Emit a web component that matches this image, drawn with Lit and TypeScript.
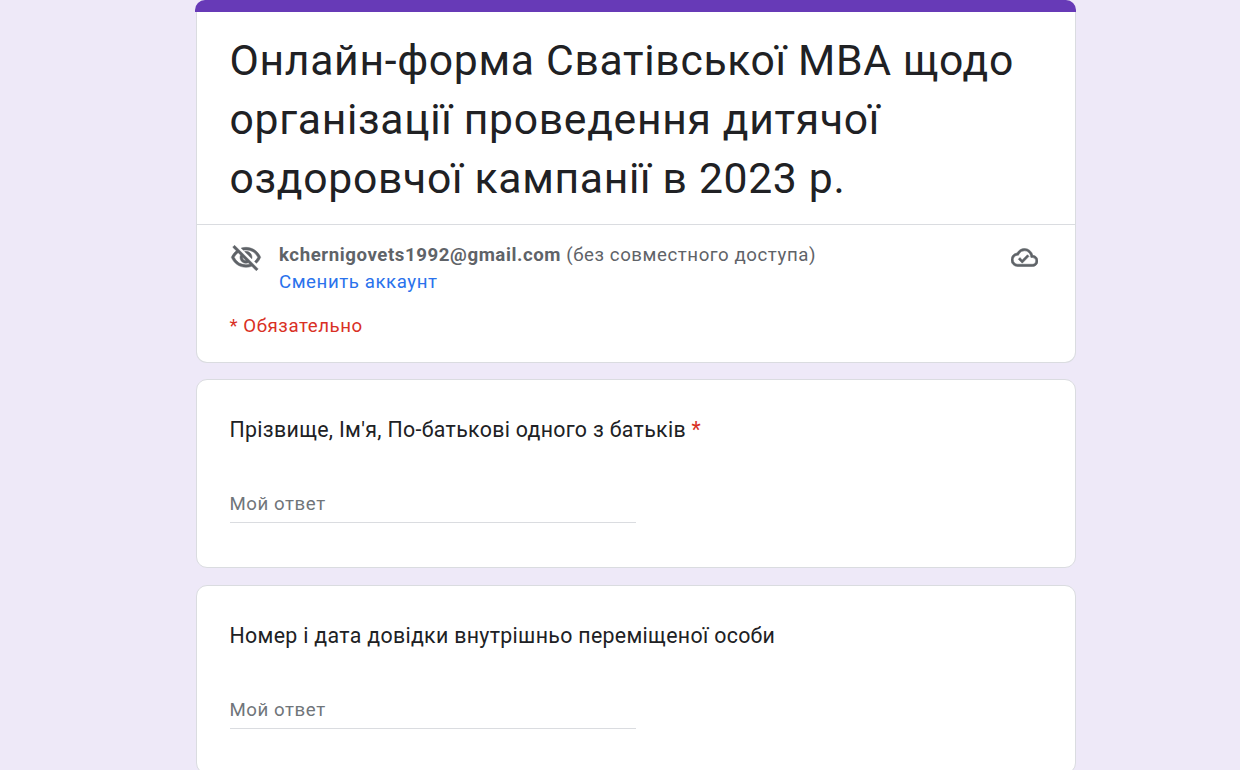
import { LitElement, html, css } from "lit";
import { customElement } from "lit/decorators.js";

@customElement("app-root")
export class AppRoot extends LitElement {
  static styles = css`
    :host { display: block; height: 770px; overflow: hidden; background: #eee9f8; font-family: Roboto, "Liberation Sans", sans-serif; color: #202124; }
    .page { width: 880px; margin-left: 196px; display: flex; flex-direction: column; gap: 16px; }
    .card { background: #fff; border: 1px solid #dadce0; border-radius: 11px; box-sizing: border-box; }
    .head { position: relative; border-top: none; height: 363px; }
    .bar { height: 12px; background: #673ab7; margin: 0 -1px 0 -2px; border-radius: 10px 10px 0 0; }
    h1 { margin: 0; padding: 19px 32px 16px 32.5px; font-weight: 400; font-size: 42.67px; line-height: 59px; letter-spacing: .69px; height: 177px; border-bottom: 1px solid #dadce0; color: #202124; }
    .acct { display: flex; padding: 17px 32px 0 33px; align-items: flex-start; }
    .eye { width: 32px; height: 32px; margin-right: 17px; flex: none; fill: #5f6368; stroke: #5f6368; stroke-width: .35; }
    .info { flex: 1; font-size: 18.67px; line-height: 27px; letter-spacing: .57px; color: #5f6368; }
    .info b { font-weight: 700; }
    .link { color: #2a72ec; display: block; }
    .cloud { width: 27px; height: 27px; flex: none; fill: #5f6368; stroke: #5f6368; stroke-width: .5; margin: 2px 5px 0 0; }
    .req { padding: 17px 32.5px 0; font-size: 18.67px; line-height: 27px; letter-spacing: .56px; color: #d93025; }
    .q { height: 189px; padding: 35px 32px 0 32.5px; }
    .q + .q { margin-top: 1px; }
    .qt { font-size: 21.33px; line-height: 30px; letter-spacing: .32px; color: #202124; }
    .qt span { color: #d93025; }
    .ans { width: 406px; margin-top: 45px; height: 33px; border-bottom: 1px solid #dadce0; font-size: 18.67px; line-height: 28px; letter-spacing: .56px; color: #70757a; box-sizing: border-box; }
  `;

  render() {
    return html`<div class="page">
      <section class="card head">
        <div class="bar"></div>
        <h1>Онлайн-форма Сватівської МВА щодо організації проведення дитячої оздоровчої кампанії в 2023 р.</h1>
        <div class="acct">
          <svg class="eye" viewBox="0 0 24 24"><path d="M12 6a9.77 9.77 0 0 1 8.82 5.5 9.76 9.76 0 0 1-2.41 3.12l1.41 1.41c1.39-1.23 2.49-2.77 3.18-4.53C21.27 7.11 17 4 12 4c-1.27 0-2.49.2-3.64.57l1.65 1.65C10.66 6.09 11.32 6 12 6zm-1.07 1.14L13 9.21c.57.25 1.03.71 1.28 1.28l2.07 2.07c.08-.34.14-.7.14-1.07C16.5 9.01 14.48 7 12 7c-.37 0-.72.05-1.07.14zM2.01 3.87l2.68 2.68A11.74 11.74 0 0 0 1 11.5C2.73 15.89 7 19 12 19c1.52 0 2.98-.29 4.32-.82l3.42 3.42 1.41-1.41L3.42 2.45 2.01 3.87zm7.5 7.5 2.61 2.61c-.04.01-.08.02-.12.02a2.5 2.5 0 0 1-2.5-2.5c0-.05.01-.08.01-.13zm-3.4-3.4 1.75 1.75a4.6 4.6 0 0 0-.36 1.78 4.507 4.507 0 0 0 6.27 4.14l.98.98c-.88.24-1.8.38-2.75.38a9.77 9.77 0 0 1-8.82-5.5c.7-1.43 1.72-2.61 2.93-3.53z"/></svg>
          <div class="info">
            <div><b>kchernigovets1992@gmail.com</b> (без совместного доступа)</div>
            <span class="link">Сменить аккаунт</span>
          </div>
          <svg class="cloud" viewBox="0 0 24 24"><path d="M19.35 10.04A7.49 7.49 0 0 0 12 4C9.11 4 6.6 5.64 5.35 8.04A5.994 5.994 0 0 0 0 14c0 3.31 2.69 6 6 6h13c2.76 0 5-2.24 5-5 0-2.64-2.05-4.78-4.65-4.96zM19 18H6c-2.21 0-4-1.79-4-4 0-2.05 1.53-3.76 3.56-3.97l1.07-.11.5-.95A5.469 5.469 0 0 1 12 6c2.62 0 4.88 1.86 5.39 4.43l.3 1.5 1.53.11A2.98 2.98 0 0 1 22 15c0 1.65-1.35 3-3 3zm-9-3.82-2.09-2.09L6.5 13.5 10 17l6.01-6.01-1.41-1.41z"/></svg>
        </div>
        <div class="req">* Обязательно</div>
      </section>
      <section class="card q">
        <div class="qt">Прізвище, Ім'я, По-батькові одного з батьків <span>*</span></div>
        <div class="ans">Мой ответ</div>
      </section>
      <section class="card q">
        <div class="qt">Номер і дата довідки внутрішньо переміщеної особи</div>
        <div class="ans">Мой ответ</div>
      </section>
    </div>`;
  }
}
